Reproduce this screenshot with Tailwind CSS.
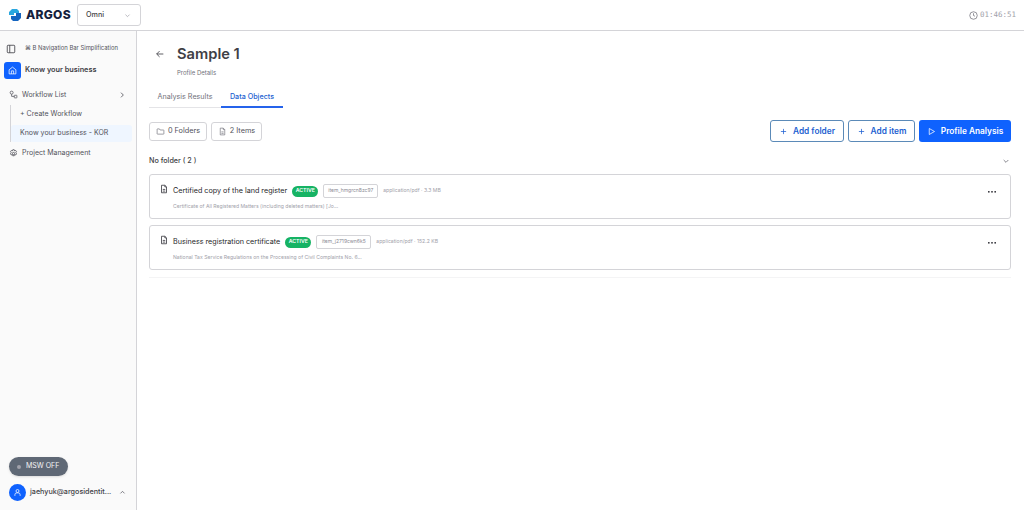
<!DOCTYPE html>
<html lang="en">
<head>
    <meta charset="UTF-8">
    <title>Argos - Sample 1</title>
    <script src="https://cdn.jsdelivr.net/npm/@tailwindcss/browser@4"></script>
</head>
<body class="bg-white h-[510px] overflow-hidden font-['Inter',sans-serif] text-[#27272a]">
    <!-- Top bar -->
    <header class="h-[31px] border-b border-[#d4d4d8] flex items-center justify-between pl-[8px] pr-[8px]">
        <div class="flex items-center">
            <svg class="w-[14px] h-[14px]" viewBox="0 0 14 14">
                <path d="M4 1 H9 L11 3 V5 H6 V7 H4 L1 7 V4Z" fill="#2aa7df"/>
                <path d="M13 5 V10 L10 13 H5 L3 11 V8 H8 V5Z" fill="#1565c0"/>
            </svg>
            <span class="ml-[4px] w-[45px] text-[12px] leading-none font-extrabold tracking-[0.3px] text-[#14213d]">ARGOS</span>
            <div class="ml-[6px] w-[64px] h-[22px] border border-[#d4d4d8] rounded-[3px] flex items-center justify-between pl-[8px] pr-[9px]">
                <span class="text-[7.2px] font-medium text-[#3f3f46]">Omni</span>
                <svg class="w-[7px] h-[7px] text-[#a1a1aa]" viewBox="0 0 24 24" fill="none" stroke="currentColor" stroke-width="2.5"><path d="M5 9l7 7 7-7"/></svg>
            </div>
        </div>
        <div class="flex items-center gap-[2px] text-[#a1a1aa]">
            <svg class="w-[9px] h-[9px]" viewBox="0 0 24 24" fill="none" stroke="#71717a" stroke-width="2"><circle cx="12" cy="12" r="10"/><path d="M12 6v6l4 2"/></svg>
            <span class="text-[7.5px] font-['DejaVu_Sans_Mono',monospace]">01:46:51</span>
        </div>
    </header>

    <div class="flex h-[479px]">
        <!-- Sidebar -->
        <aside class="w-[137px] shrink-0 bg-[#fafafa] border-r border-[#d4d4d8] flex flex-col pt-[11px]">
            <div class="flex items-center pl-[6px] h-[13px]">
                <svg class="w-[10px] h-[10px] text-[#3f3f46]" viewBox="0 0 24 24" fill="none" stroke="currentColor" stroke-width="2"><rect x="3" y="3" width="18" height="18" rx="2"/><path d="M9 3v18"/></svg>
                <span class="ml-[9px] text-[5.9px] text-[#52525b]">⌘ B Navigation Bar Simplification</span>
            </div>
            <div class="flex items-center pl-[4px] mt-[6px] h-[18px]">
                <div class="w-[17px] h-[17px] rounded-[3px] bg-[#0f62fe] flex items-center justify-center">
                    <svg class="w-[9px] h-[9px]" viewBox="0 0 24 24" fill="none" stroke="#fff" stroke-width="2"><path d="M3 10l9-7 9 7v11H3z"/><path d="M9 21v-8h6v8"/></svg>
                </div>
                <span class="ml-[4px] text-[7.3px] font-semibold text-[#3f3f46]">Know your business</span>
            </div>
            <div class="flex items-center justify-between pl-[9px] pr-[10px] mt-[9px] h-[14px]">
                <div class="flex items-center gap-[4px]">
                    <svg class="w-[9px] h-[9px] text-[#52525b]" viewBox="0 0 24 24" fill="none" stroke="currentColor" stroke-width="2"><circle cx="7" cy="7" r="4"/><rect x="14" y="14" width="7" height="7" rx="1"/><path d="M7 11v6h7"/></svg>
                    <span class="text-[6.9px] text-[#52525b]">Workflow List</span>
                </div>
                <svg class="w-[8px] h-[8px] text-[#52525b]" viewBox="0 0 24 24" fill="none" stroke="currentColor" stroke-width="2.5"><path d="M9 5l7 7-7 7"/></svg>
            </div>
            <div class="ml-[10px] mr-[4px] mt-[3px] border-l border-[#d4d4d8] flex flex-col">
                <div class="h-[19px] pl-[9px] flex items-center text-[7px] text-[#52525b]">+ Create Workflow</div>
                <div class="h-[17px] mt-[1px] pl-[9px] flex items-center text-[7px] text-[#52525b] bg-[#eff6ff] rounded-[3px]">Know your business - KOR</div>
            </div>
            <div class="flex items-center gap-[4px] pl-[9px] mt-[4px] h-[14px]">
                <svg class="w-[9px] h-[9px] text-[#52525b]" viewBox="0 0 24 24" fill="none" stroke="currentColor" stroke-width="2.2"><circle cx="12" cy="12" r="3"/><path d="M10 2h4l1 3 3-1 2 3-2 3 2 2-2 4-3-1-1 3h-4l-1-3-3 1-2-4 2-2-2-3 2-3 3 1z"/></svg>
                <span class="text-[7px] text-[#52525b]">Project Management</span>
            </div>
            <div class="mt-auto pl-[9px] pb-[9px]">
                <div class="w-[59px] h-[19px] rounded-full bg-[#5f6875] shadow flex items-center pl-[8px] gap-[5px]">
                    <span class="w-[4px] h-[4px] rounded-full bg-[#a1a1aa]"></span>
                    <span class="text-[7px] text-[#f4f4f5]">MSW OFF</span>
                </div>
                <div class="flex items-center mt-[8px] pr-[10px]">
                    <div class="w-[17px] h-[17px] rounded-full bg-[#0f62fe] flex items-center justify-center">
                        <svg class="w-[9px] h-[9px]" viewBox="0 0 24 24" fill="none" stroke="#fff" stroke-width="2"><circle cx="12" cy="8" r="4"/><path d="M5 21v-3a5 5 0 015-5h4a5 5 0 015 5v3"/></svg>
                    </div>
                    <span class="ml-[4px] text-[7.2px] font-medium text-[#3f3f46] whitespace-nowrap">jaehyuk@argosidentit...</span>
                    <svg class="ml-auto w-[7px] h-[7px] text-[#52525b]" viewBox="0 0 24 24" fill="none" stroke="currentColor" stroke-width="2.5"><path d="M5 15l7-7 7 7"/></svg>
                </div>
            </div>
        </aside>

        <!-- Main -->
        <main class="flex-1 pl-[12px] pr-[13px] pt-[13px]">
            <div class="flex items-center pl-[6px] h-[20px]">
                <svg class="w-[10px] h-[10px] text-[#3f3f46]" viewBox="0 0 24 24" fill="none" stroke="currentColor" stroke-width="2"><path d="M20 12H4M11 5l-7 7 7 7"/></svg>
                <h1 class="ml-[12px] text-[14.7px] font-semibold text-[#3f3f46] leading-none">Sample 1</h1>
            </div>
            <p class="ml-[28px] mt-[4px] text-[6px] text-[#71717a] leading-[10px]">Profile Details</p>

            <div class="flex mt-[7px] h-[23px] border-b border-[#e4e4e7] w-[134px]">
                <div class="w-[72px] text-center text-[7.2px] text-[#71717a] leading-[24px]">Analysis Results</div>
                <div class="w-[62px] -mb-px text-center text-[7.2px] font-medium text-[#1d5fd1] leading-[24px] border-b-2 border-[#2563eb]">Data Objects</div>
            </div>

            <div class="flex items-center justify-between mt-[12px] h-[22px]">
                <div class="flex gap-[4px]">
                    <div class="w-[58px] h-[19px] rounded-[3px] border border-[#d4d4d8] flex items-center justify-center gap-[3px] text-[7.3px] text-[#52525b]">
                        <svg class="w-[9px] h-[9px] text-[#71717a]" viewBox="0 0 24 24" fill="none" stroke="currentColor" stroke-width="1.8"><path d="M3 6a1 1 0 011-1h5l2 3h9a1 1 0 011 1v9a1 1 0 01-1 1H4a1 1 0 01-1-1z"/></svg>
                        0 Folders
                    </div>
                    <div class="w-[51px] h-[19px] rounded-[3px] border border-[#d4d4d8] flex items-center justify-center gap-[3px] text-[7.3px] text-[#52525b]">
                        <svg class="w-[9px] h-[9px] text-[#71717a]" viewBox="0 0 24 24" fill="none" stroke="currentColor" stroke-width="1.8"><path d="M14 3H6v18h12V7zM14 3v4h4M9 13h6M9 17h6"/></svg>
                        2 Items
                    </div>
                </div>
                <div class="flex gap-[4px]">
                    <div class="w-[74px] h-[22px] rounded-[3px] border border-[#5b8ab8] flex items-center justify-center gap-[5px] text-[8.3px] font-semibold text-[#1d5fd1]">
                        <svg class="w-[9px] h-[9px]" viewBox="0 0 24 24" fill="none" stroke="currentColor" stroke-width="2"><path d="M12 5v14M5 12h14"/></svg>
                        Add folder
                    </div>
                    <div class="w-[67px] h-[22px] rounded-[3px] border border-[#5b8ab8] flex items-center justify-center gap-[5px] text-[8.3px] font-semibold text-[#1d5fd1]">
                        <svg class="w-[9px] h-[9px]" viewBox="0 0 24 24" fill="none" stroke="currentColor" stroke-width="2"><path d="M12 5v14M5 12h14"/></svg>
                        Add item
                    </div>
                    <div class="w-[92px] h-[22px] rounded-[3px] bg-[#0f62fe] flex items-center justify-center gap-[5px] text-[8.3px] font-semibold text-white">
                        <svg class="w-[9px] h-[9px]" viewBox="0 0 24 24" fill="none" stroke="currentColor" stroke-width="2"><path d="M6 4l14 8-14 8z"/></svg>
                        Profile Analysis
                    </div>
                </div>
            </div>

            <div class="flex items-center justify-between mt-[8px] h-[22px] pr-[1px]">
                <span class="text-[7.2px] font-medium text-[#3f3f46]">No folder ( 2 )</span>
                <svg class="w-[8px] h-[8px] text-[#71717a]" viewBox="0 0 24 24" fill="none" stroke="currentColor" stroke-width="2.5"><path d="M5 9l7 7 7-7"/></svg>
            </div>

            <div class="mt-[2px] flex flex-col gap-[6px]">
                <div class="h-[45px] border border-[#d4d4d8] rounded-[3px] pl-[9px] pr-[13px] pt-[9px] flex justify-between">
                    <div>
                        <div class="flex items-center h-[14px]">
                            <svg class="w-[10px] h-[10px] text-[#3f3f46] -mt-[4px]" viewBox="0 0 24 24" fill="none" stroke="currentColor" stroke-width="2"><path d="M14 3H6v18h12V7zM14 3v4h4M9 13h6M9 17h6"/></svg>
                            <span class="ml-[4px] text-[7.2px] text-[#27272a]">Certified copy of the land register</span>
                            <span class="ml-[5px] w-[26px] h-[11px] rounded-full bg-[#16b364] text-white text-[5.2px] font-semibold flex items-center justify-center">ACTIVE</span>
                            <span class="ml-[5px] w-[55px] h-[14px] border border-[#d4d4d8] rounded-[2px] text-[5px] text-[#8a8a93] flex items-center justify-center">item_hmgrcn8zc97</span>
                            <span class="ml-[5px] text-[5.1px] text-[#a1a1aa]">application/pdf · 3.3 MB</span>
                        </div>
                        <p class="ml-[14px] mt-[4px] text-[5.1px] text-[#a1a1aa] leading-[9px]">Certificate of All Registered Matters (including deleted matters) [Jo...</p>
                    </div>
                    <svg class="w-[8px] h-[16px] mr-[1px]" viewBox="0 0 8 16" fill="#3f3f46"><rect x="0" y="7" width="1.6" height="1.6"/><rect x="3.2" y="7" width="1.6" height="1.6"/><rect x="6.4" y="7" width="1.6" height="1.6"/></svg>
                </div>
                <div class="h-[45px] border border-[#d4d4d8] rounded-[3px] pl-[9px] pr-[13px] pt-[9px] flex justify-between">
                    <div>
                        <div class="flex items-center h-[14px]">
                            <svg class="w-[10px] h-[10px] text-[#3f3f46] -mt-[4px]" viewBox="0 0 24 24" fill="none" stroke="currentColor" stroke-width="2"><path d="M14 3H6v18h12V7zM14 3v4h4M9 13h6M9 17h6"/></svg>
                            <span class="ml-[4px] text-[7.2px] text-[#27272a]">Business registration certificate</span>
                            <span class="ml-[5px] w-[26px] h-[11px] rounded-full bg-[#16b364] text-white text-[5.2px] font-semibold flex items-center justify-center">ACTIVE</span>
                            <span class="ml-[5px] w-[55px] h-[14px] border border-[#d4d4d8] rounded-[2px] text-[5px] text-[#8a8a93] flex items-center justify-center">item_j2719cwn6k5</span>
                            <span class="ml-[5px] text-[5.1px] text-[#a1a1aa]">application/pdf · 152.2 KB</span>
                        </div>
                        <p class="ml-[14px] mt-[4px] text-[5.1px] text-[#a1a1aa] leading-[9px]">National Tax Service Regulations on the Processing of Civil Complaints No. 6...</p>
                    </div>
                    <svg class="w-[8px] h-[16px] mr-[1px]" viewBox="0 0 8 16" fill="#3f3f46"><rect x="0" y="7" width="1.6" height="1.6"/><rect x="3.2" y="7" width="1.6" height="1.6"/><rect x="6.4" y="7" width="1.6" height="1.6"/></svg>
                </div>
            </div>
            <div class="mt-[7px] border-t border-[#f4f4f5]"></div>
        </main>
    </div>
</body>
</html>
